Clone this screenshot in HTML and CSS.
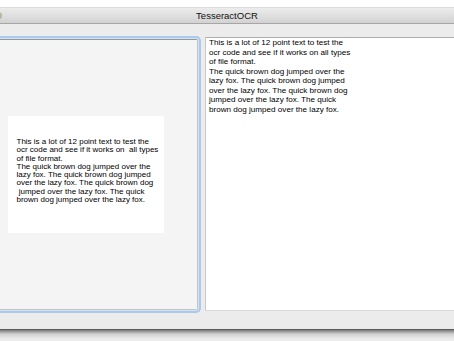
FILE: index.html
```html
<!DOCTYPE html>
<html lang="en">
<head>
    <meta charset="UTF-8">
    <meta name="viewport" content="width=device-width, initial-scale=1.0">
    <title>TesseractOCR</title>
    <link rel="stylesheet" href="styles.css">
</head>
<body>
    <div class="window">
        <div class="titleBar">
            <span class="trafficLight"></span>
            <span class="windowTitle">TesseractOCR</span>
        </div>

        <div class="contentContainer">
            <!-- Scanned image well -->
            <div class="imageWell">
                <div class="scannedPage"><div class="scannedText">This is a lot of 12 point text to test the
ocr code and see if it works on  all types
of file format.
The quick brown dog jumped over the
lazy fox. The quick brown dog jumped
over the lazy fox. The quick brown dog
 jumped over the lazy fox. The quick
brown dog jumped over the lazy fox.</div></div>
            </div>

            <!-- OCR result -->
            <div class="resultText">This is a lot of 12 point text to test the
                ocr code and see if it works on all types
                of file format.
                The quick brown dog jumped over the
                lazy fox. The quick brown dog jumped
                over the lazy fox. The quick brown dog
                jumped over the lazy fox. The quick
                brown dog jumped over the lazy fox.</div>
        </div>
    </div>
    <div class="windowShadow"></div>
</body>
</html>
```

FILE: styles.css
```css
* {
    box-sizing: border-box;
}

body {
    margin: 0;
    padding-top: 7px;
    width: 454px;
    height: 341px;
    overflow: hidden;
    background-color: #fff;
    font-family: 'Liberation Sans', Arial, sans-serif;
}

.window {
    width: 528px;
    margin-left: -37px;
    background-color: #ececec;
    border-bottom: 1px solid #5c5c5c;
}

.titleBar {
    position: relative;
    height: 17px;
    border-top: 1px solid #dcdcdc;
    border-bottom: 1px solid #a6a6a6;
    background: linear-gradient(#ececec, #d2d2d2);
    text-align: center;
    font-size: 9.5px;
    line-height: 16px;
    color: #111;
}

.trafficLight {
    position: absolute;
    left: 32px;
    top: 4px;
    width: 7px;
    height: 7px;
    border-radius: 50%;
    background: radial-gradient(circle at 40% 40%, #d4d4c0, #9c9c86);
}

.contentContainer {
    display: flex;
    align-items: flex-start;
    gap: 7px;
    height: 305px;
    padding: 13px 0 0 10px;
}

.imageWell {
    flex: none;
    display: flex;
    align-items: center;
    justify-content: center;
    width: 225px;
    height: 271px;
    margin-top: 2px;
    border: 1px solid #c4c4c4;
    border-top-color: #979797;
    border-radius: 2px;
    background-color: #f4f4f4;
    box-shadow: 0 0 0 1px #d3e3f3, 0 0 0 3px #abc9ea;
}

.scannedPage {
    width: 156px;
    height: 117px;
    padding: 22px 0 0 9px;
    background-color: #fff;
}

.scannedText {
    white-space: pre;
    font-size: 8px;
    line-height: 8.25px;
    color: #000;
}

.resultText {
    flex: none;
    width: 300px;
    height: 274px;
    padding: 0 3px;
    border: 1px solid #c8c8c8;
    border-top-color: #adadad;
    border-bottom-color: #dadada;
    background-color: #fff;
    white-space: pre-line;
    font-size: 8.1px;
    line-height: 9.55px;
    color: #000;
}

.windowShadow {
    height: 11px;
    background: linear-gradient(#7a7a7a, #cfcfcf 4px, #e8e8e8 8px, #eeeeee);
}
```
